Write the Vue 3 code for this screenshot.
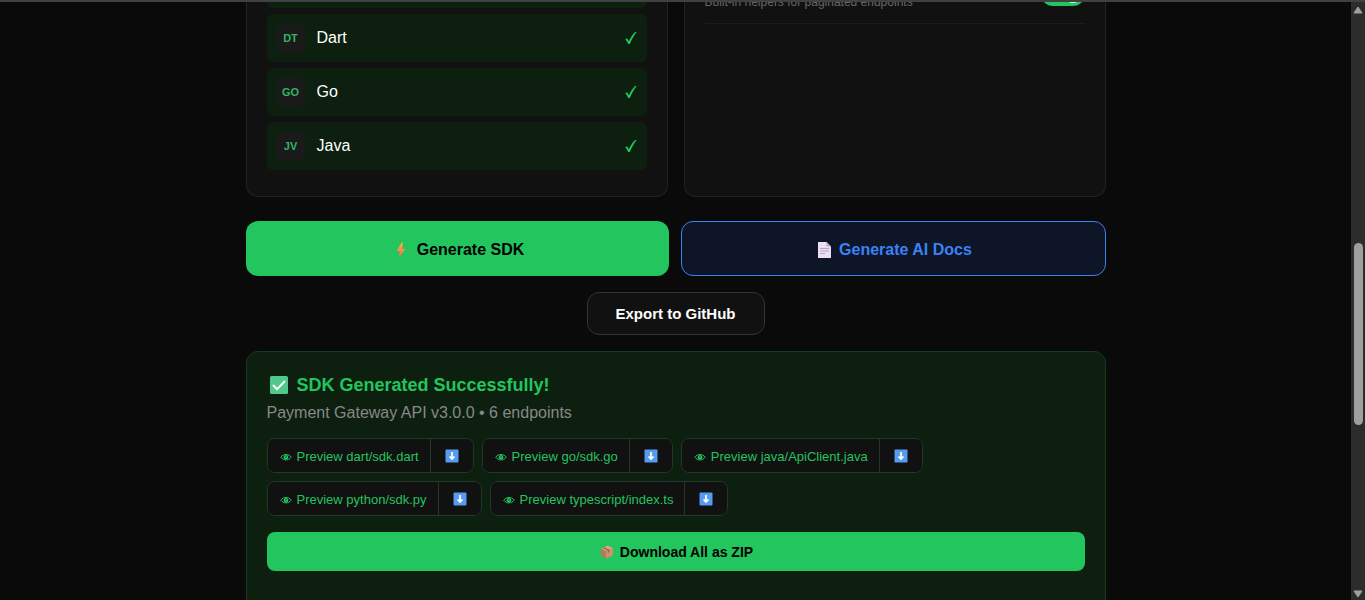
<script setup>
import { ref } from 'vue'

const languages = ref([
  { code: 'DT', name: 'Dart', on: true },
  { code: 'GO', name: 'Go', on: true },
  { code: 'JV', name: 'Java', on: true },
])
const pagination = ref(true)
const files = ['dart/sdk.dart', 'go/sdk.go', 'java/ApiClient.java', 'python/sdk.py', 'typescript/index.ts']
</script>

<template>
  <div class="window">
    <main class="pane">
      <div class="container">
        <div class="panels">
          <section class="panel">
            <div class="row-end"></div>
            <button
              v-for="l in languages"
              :key="l.code"
              type="button"
              class="lang"
              :class="{ on: l.on }"
              :aria-pressed="l.on"
              @click="l.on = !l.on"
            >
              <span class="code">{{ l.code }}</span>
              <span class="name">{{ l.name }}</span>
              <svg v-if="l.on" class="check" viewBox="0 0 12 14" aria-hidden="true">
                <path d="M.3 8.200 1.800 7.200C2.600 8 3.200 9 3.900 10.200 5.500 6.600 7.400 3.500 10.200.9H11.700C9 4.200 6.900 8 4.800 13H3.200C2.500 11.100 1.600 9.500.3 8.200Z" fill="currentColor" />
              </svg>
            </button>
          </section>

          <section class="panel">
            <div class="option">
              <label for="pagination">Built-in helpers for paginated endpoints</label>
              <input id="pagination" v-model="pagination" type="checkbox" class="toggle" />
            </div>
          </section>
        </div>

        <div class="actions">
          <button type="button" class="action primary">
            <svg class="bolt" viewBox="-3 0 20 18" aria-hidden="true">
              <defs>
                <linearGradient id="bolt-fill" x1="0" y1="0" x2="0" y2="1">
                  <stop offset="0" stop-color="#f5b04c" />
                  <stop offset="1" stop-color="#f0704c" />
                </linearGradient>
              </defs>
              <path d="M8.500 1.500 3.500 10h3.200L6 16.500 12.500 8H9.300L10 1.500Z" fill="url(#bolt-fill)" />
            </svg>
            Generate SDK
          </button>
          <button type="button" class="action docs">
            <svg class="page" viewBox="-3 0 18 18" aria-hidden="true">
              <path d="M1 1h8.500L14 5.500V17H1Z" fill="#e9e0f2" />
              <path d="M9.500 1v4.500H14Z" fill="#b9a9cc" />
              <path d="M3 7.500h9M3 10h9M3 12.500h5" stroke="#b5a3c4" stroke-width="1" />
            </svg>
            Generate AI Docs
          </button>
        </div>

        <button type="button" class="export">Export to GitHub</button>

        <section class="result">
          <h2>
            <svg class="done" viewBox="0 0 20 20" aria-hidden="true">
              <rect x="1" y="1" width="18" height="18" rx="1.500" fill="#4fc98a" />
              <path d="m4 10 4 4.200 8-8.200" fill="none" stroke="#fff" stroke-width="2" />
            </svg>
            SDK Generated Successfully!
          </h2>
          <p>Payment Gateway API v3.0.0 • 6 endpoints</p>
          <div class="files">
            <div v-for="f in files" :key="f" class="file">
              <button type="button" class="preview">
                <svg class="eye" viewBox="0 0 12 8" aria-hidden="true">
                  <path d="M.7 4.200C2.300 2.300 4 1.500 6 1.500S9.700 2.300 11.300 4.200C9.700 6.100 8 6.900 6 6.900S2.300 6.100.7 4.200Z" fill="none" stroke="currentColor" stroke-width="1" />
                  <circle cx="6" cy="4.200" r="2.300" fill="currentColor" />
                  <path d="M5.200 4.300 6.800 3.500" stroke="#111" stroke-width=".7" />
                </svg>
                Preview {{ f }}
              </button>
              <button type="button" class="save" :aria-label="'Download ' + f">
                <svg viewBox="0 0 14 14" aria-hidden="true">
                  <rect x=".5" y=".5" width="13" height="13" rx="1" fill="#569cf0" />
                  <path d="M7 3v7M4.500 7.500 7 10l2.500-2.500" fill="none" stroke="#fff" stroke-width="1.700" />
                </svg>
              </button>
            </div>
          </div>
          <button type="button" class="zip">
            <svg class="box" viewBox="-2 0 16 14" aria-hidden="true">
              <path d="M1 3.700 7.800.5 13 3 6 6.300Z" fill="#dfa57f" />
              <path d="M1 3.700 6 6.300V13.500L1 10.600Z" fill="#b9775a" />
              <path d="M6 6.300 13 3v7.300L6 13.500Z" fill="#d28f6c" />
              <path d="m3.300 2.700 5.200 2.400v2.500" fill="none" stroke="#8c5a48" stroke-width="1.200" />
            </svg>
            Download All as ZIP
          </button>
        </section>
      </div>
    </main>

    <div class="scrollbar" aria-hidden="true">
      <svg viewBox="0 0 10 8"><path d="M5 1 9 7H1Z" fill="#a0a0a0" stroke="#a0a0a0" stroke-linejoin="round" /></svg>
      <div class="track"><div class="thumb"></div></div>
      <svg viewBox="0 0 10 8"><path d="M5 7 9 1H1Z" fill="#a0a0a0" stroke="#a0a0a0" stroke-linejoin="round" /></svg>
    </div>
  </div>
</template>

<style>
html,
body {
  background: #0a0a0a;
}
</style>

<style scoped>
* {
  box-sizing: border-box;
}
.window {
  display: flex;
  height: 100vh;
  overflow: hidden;
  border-top: 2px solid #414141;
  background: #0a0a0a;
  color: #fff;
  font-family: "Liberation Sans", Arial, sans-serif;
  font-size: 16px;
}
button {
  margin: 0;
  font-family: inherit;
  cursor: pointer;
}
svg {
  flex: none;
}
.pane {
  flex: 1;
  overflow: hidden;
}
.container {
  max-width: 860px;
  margin: 0 auto;
}
.panels {
  display: grid;
  grid-template-columns: 1fr 1fr;
  gap: 16px;
}
/* The panels run on above the scrolled view, so they have no top edge. */
.panel {
  padding: 0 20px 20px;
  border: 1px solid #222;
  border-top: 0;
  border-radius: 0 0 12px 12px;
  background: #111;
}
.row-end {
  height: 6px;
  margin-bottom: 6px;
  border-radius: 0 0 6px 6px;
  background: #0d1f0f;
}
.lang {
  display: flex;
  align-items: center;
  gap: 12px;
  width: 100%;
  height: 48px;
  margin-bottom: 6px;
  padding: 10px;
  border: 0;
  border-radius: 6px;
  background: #111;
  color: #fff;
  font-size: 16px;
  text-align: left;
}
.lang.on {
  background: #0d1f0f;
}
.code {
  display: grid;
  place-items: center;
  width: 28px;
  height: 28px;
  border-radius: 6px;
  background: #1a1a1a;
  color: #2fb463;
  font-size: 11px;
  font-weight: 700;
}
.name {
  flex: 1;
}
.check {
  width: 12px;
  height: 14px;
  color: #22c55e;
}
.option {
  display: flex;
  align-items: flex-end;
  justify-content: space-between;
  margin-top: -20px;
  padding-bottom: 13px;
  border-bottom: 1px solid #1c1c1c;
}
.option label {
  color: #666;
  font-size: 12px;
  line-height: 16px;
}
.toggle {
  display: flex;
  align-items: center;
  appearance: none;
  width: 44px;
  height: 24px;
  margin: 0 0 4px;
  padding: 3px;
  border-radius: 12px;
  background: #333;
}
.toggle::after {
  content: "";
  width: 18px;
  height: 18px;
  border-radius: 50%;
  background: #fff;
}
.toggle:checked {
  justify-content: flex-end;
  background: #22c55e;
}
.actions {
  display: flex;
  gap: 12px;
  margin: 24px 0 16px;
}
.action {
  display: flex;
  flex: 1 1 0;
  align-items: center;
  justify-content: center;
  gap: 7px;
  height: 55px;
  padding: 2px 0 0;
  border: 0;
  border-radius: 12px;
  font-size: 16px;
  font-weight: 700;
}
.primary {
  background: #22c55e;
  color: #000;
}
.docs {
  border: 1px solid #3b82f6;
  background: #0d1526;
  color: #3b82f6;
}
.bolt {
  width: 20px;
  height: 18px;
}
.page {
  width: 18px;
  height: 18px;
}
.export {
  display: block;
  height: 43px;
  margin: 0 auto 16px;
  padding: 0 28px;
  border: 1px solid #333;
  border-radius: 12px;
  background: #111;
  color: #fff;
  font-size: 15px;
  font-weight: 700;
}
.result {
  padding: 20px 20px 40px;
  border: 1px solid #1a3a1f;
  border-radius: 12px;
  background: #0d1f0f;
}
h2 {
  display: flex;
  align-items: center;
  gap: 8px;
  margin: 0 0 5px;
  padding-left: 2px;
  color: #22c55e;
  font-size: 18px;
  line-height: 26px;
}
.done {
  width: 20px;
  height: 20px;
}
p {
  margin: 0 0 15px;
  color: #888;
  line-height: 20px;
}
.files {
  display: flex;
  flex-wrap: wrap;
  gap: 8px;
  margin-bottom: 16px;
}
.file {
  display: flex;
  height: 35px;
  overflow: hidden;
  border: 1px solid #1f3a27;
  border-radius: 8px;
  background: #111;
}
.preview,
.save {
  display: flex;
  align-items: center;
  border: 0;
  background: #111;
}
.preview {
  gap: 5px;
  padding: 2px 11px 0 12px;
  color: #22c55e;
  font-size: 13px;
}
.eye {
  width: 12px;
  height: 8px;
}
.save {
  padding: 0 14px;
  border-left: 1px solid #1f3a27;
}
.save svg {
  width: 14px;
  height: 14px;
}
.zip {
  display: flex;
  align-items: center;
  justify-content: center;
  gap: 6px;
  width: 100%;
  height: 39px;
  border: 0;
  border-radius: 8px;
  background: #22c55e;
  color: #000;
  font-size: 14px;
  font-weight: 700;
}
.box {
  width: 16px;
  height: 14px;
}
.scrollbar {
  display: flex;
  flex-direction: column;
  align-items: center;
  width: 14px;
  padding: 4px 0 2px;
  background: #2c2c2c;
}
.scrollbar svg {
  width: 10px;
  height: 8px;
}
.track {
  flex: 1;
  padding-top: 229px;
}
.thumb {
  width: 9px;
  height: 182px;
  border-radius: 5px;
  background: #9f9f9f;
}
</style>
